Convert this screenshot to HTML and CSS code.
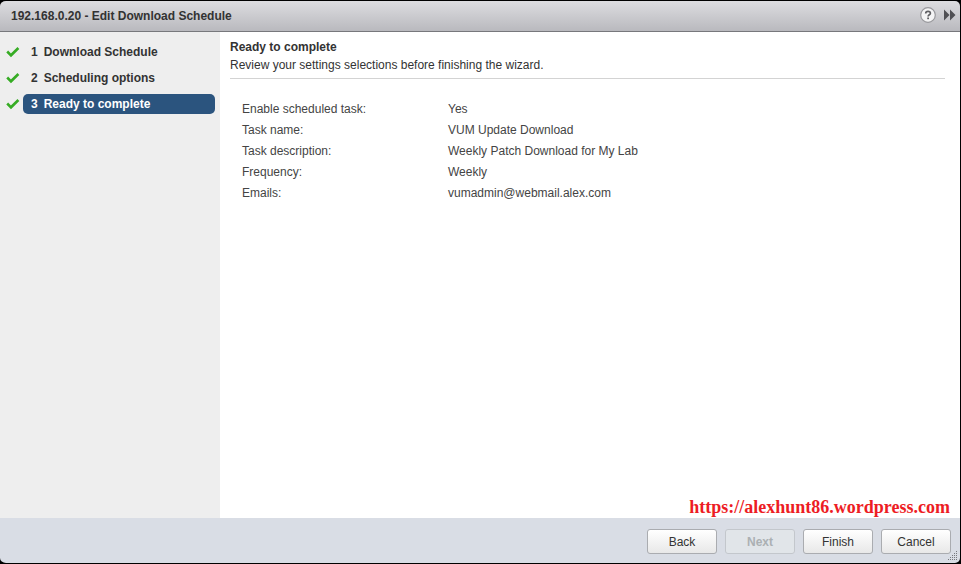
FILE: index.html
```html
<!DOCTYPE html>
<html lang="en">
<head>
    <meta charset="UTF-8">
    <meta name="viewport" content="width=device-width, initial-scale=1.0">
    <title>Edit Download Schedule</title>
    <link rel="stylesheet" href="styles.css">
</head>
<body>
    <svg class="symbols" width="0" height="0">
        <symbol id="check" viewBox="0 0 14 12">
            <path d="M1.2 5.5 L5 9.3 L12.4 2" fill="none" stroke="#36ac24" stroke-width="2.6"/>
        </symbol>
    </svg>
    <div class="wizard">
        <header class="titlebar">
            <h1>192.168.0.20 - Edit Download Schedule</h1>
            <button class="icon-button" type="button" aria-label="Help">
                <svg width="16" height="16" viewBox="0 0 16 16">
                    <circle cx="8" cy="8" r="7.3" fill="#f4f4f5" stroke="#98989c" stroke-width="1.2"/>
                    <path d="M5.7 6.4 C5.7 3.7 10.4 3.7 10.4 6.2 C10.4 7.8 8.1 7.8 8.1 9.5" fill="none" stroke="#606064" stroke-width="1.7"/>
                    <rect x="7.2" y="10.5" width="1.8" height="1.7" fill="#606064"/>
                </svg>
            </button>
            <button class="icon-button" type="button" aria-label="Minimize">
                <svg width="12" height="12" viewBox="0 0 12 12">
                    <path d="M0 0.5 L5.5 6 L0 11.5 Z M6 0.5 L11.5 6 L6 11.5 Z" fill="#505054"/>
                </svg>
            </button>
        </header>
        <div class="content">
            <ol class="steps">
                <li>
                    <svg width="14" height="12"><use href="#check"/></svg>
                    <a href="#"><span>1</span>Download Schedule</a>
                </li>
                <li>
                    <svg width="14" height="12"><use href="#check"/></svg>
                    <a href="#"><span>2</span>Scheduling options</a>
                </li>
                <li>
                    <svg width="14" height="12"><use href="#check"/></svg>
                    <a class="active" href="#" aria-current="step"><span>3</span>Ready to complete</a>
                </li>
            </ol>
            <main class="page">
                <div class="page-header">
                    <h2>Ready to complete</h2>
                    <p>Review your settings selections before finishing the wizard.</p>
                </div>
                <dl class="summary">
                    <dt>Enable scheduled task:</dt>
                    <dd>Yes</dd>
                    <dt>Task name:</dt>
                    <dd>VUM Update Download</dd>
                    <dt>Task description:</dt>
                    <dd>Weekly Patch Download for My Lab</dd>
                    <dt>Frequency:</dt>
                    <dd>Weekly</dd>
                    <dt>Emails:</dt>
                    <dd>vumadmin@webmail.alex.com</dd>
                </dl>
                <a class="site-link" href="https://alexhunt86.wordpress.com">https://alexhunt86.wordpress.com</a>
            </main>
        </div>
        <footer class="buttons">
            <button type="button">Back</button>
            <button type="button" disabled>Next</button>
            <button type="button">Finish</button>
            <button type="button">Cancel</button>
            <svg class="grip" width="10" height="10" viewBox="0 0 10 10">
                <path d="M8 0h1v1h-1z M6 2h1v1h-1z M8 2h1v1h-1z M4 4h1v1h-1z M6 4h1v1h-1z M8 4h1v1h-1z M2 6h1v1h-1z M4 6h1v1h-1z M6 6h1v1h-1z M8 6h1v1h-1z M0 8h1v1h-1z M2 8h1v1h-1z M4 8h1v1h-1z M6 8h1v1h-1z M8 8h1v1h-1z" fill="#77797d"/>
            </svg>
        </footer>
    </div>
</body>
</html>
```

FILE: styles.css
```css
* {
    box-sizing: border-box;
}
body {
    margin: 0;
    background-color: black;
    color: #333;
    font-family: "Liberation Sans", Arial, sans-serif;
    font-size: 12px;
    line-height: 18px;
}
h1, h2, p, ol, dl, dd {
    margin: 0;
    padding: 0;
    font-size: 12px;
}
.symbols {
    position: absolute;
}
.wizard {
    display: flex;
    flex-direction: column;
    min-height: 100vh;
    border: 1px solid black;
    border-left: none;
    border-radius: 6px;
    overflow: hidden;
}
.titlebar {
    display: flex;
    align-items: center;
    gap: 8px;
    height: 31px;
    padding: 0 4px 2px 11px;
    background: linear-gradient(#dddde0, #b9b9be);
    border-bottom: 1px solid #77787c;
}
.titlebar h1 {
    flex: 1;
    padding-top: 2px;
}
.icon-button {
    display: flex;
    padding: 0;
    border: none;
    background: none;
    cursor: pointer;
}
.content {
    display: flex;
    flex: 1;
    background-color: white;
}
.steps {
    width: 220px;
    padding: 10px 5px 10px 6px;
    background-color: #eee;
    list-style: none;
}
.steps li {
    display: flex;
    align-items: center;
    gap: 3px;
    margin-bottom: 6px;
}
.steps a {
    display: flex;
    flex: 1;
    gap: 6px;
    padding: 1px 8px;
    border-radius: 5px;
    color: #333;
    font-weight: bold;
    text-decoration: none;
}
.steps a.active {
    background-color: #2b547e;
    color: white;
}
.page {
    display: flex;
    flex-direction: column;
    flex: 1;
    padding: 6px 10px 0;
}
.page-header {
    margin-right: 5px;
    padding-bottom: 4px;
    border-bottom: 1px solid #d3d3d3;
}
.summary {
    display: grid;
    grid-template-columns: 206px 1fr;
    row-gap: 3px;
    padding: 21px 12px;
}
.summary dt, .summary dd {
    color: #444;
}
.site-link {
    align-self: flex-end;
    margin-top: auto;
    padding-bottom: 2px;
    color: #ed1c24;
    font-family: "Liberation Serif", "Times New Roman", serif;
    font-size: 18px;
    font-weight: bold;
    text-decoration: none;
}
.buttons {
    display: flex;
    justify-content: flex-end;
    gap: 8px;
    position: relative;
    padding: 11px 9px 9px;
    background-color: #d9dde5;
}
.buttons button {
    width: 70px;
    height: 25px;
    padding: 0;
    border: 1px solid #aaacb0;
    border-radius: 3px;
    background: linear-gradient(white, #e8e8e8);
    color: #333;
    font-family: inherit;
    font-size: 12px;
    cursor: pointer;
}
.buttons button:disabled {
    border-color: #c3c7cc;
    background: #e1e5e9;
    color: #abb0b3;
    font-weight: bold;
    cursor: default;
}
.grip {
    position: absolute;
    right: 2px;
    bottom: 2px;
}
```
